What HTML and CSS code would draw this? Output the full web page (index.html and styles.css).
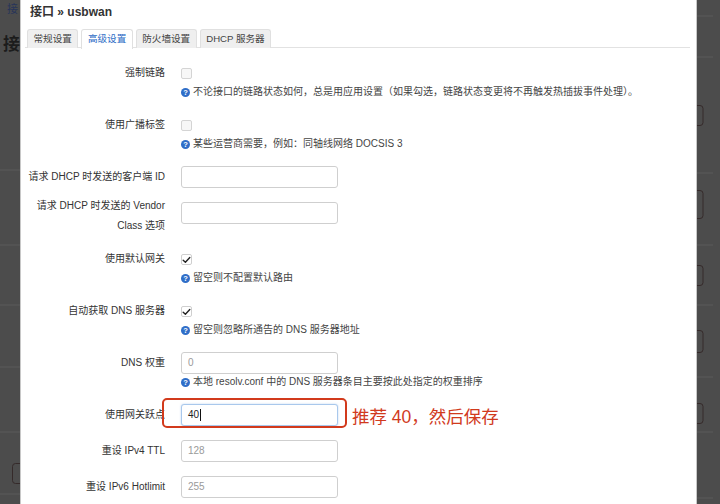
FILE: index.html
```html
<!DOCTYPE html>
<html lang="zh-CN">
<head>
<meta charset="utf-8">
<title>接口 » usbwan</title>
<link rel="stylesheet" href="styles.css">
</head>
<body>
<div class="screen">
  <div class="backdrop backdrop-left">
    <svg width="20" height="504" viewBox="0 0 20 504">
      <text x="7" y="13" class="bg-small">接</text>
      <text x="3" y="50" class="bg-big">接</text>
      <g class="bg-line">
        <line x1="0" y1="170" x2="20" y2="170"/>
        <line x1="0" y1="245" x2="20" y2="245"/>
        <line x1="0" y1="305" x2="20" y2="305"/>
        <line x1="0" y1="367" x2="20" y2="367"/>
        <line x1="0" y1="432" x2="20" y2="432"/>
        <line x1="0" y1="494" x2="20" y2="494"/>
      </g>
      <rect x="12.5" y="463.5" width="14" height="20" rx="3" class="bg-btn"/>
    </svg>
  </div>

  <div class="modal">
    <h3 class="title">接口 » usbwan</h3>
    <ul class="tabs">
      <li class="tab">常规设置</li>
      <li class="tab active">高级设置</li>
      <li class="tab">防火墙设置</li>
      <li class="tab">DHCP 服务器</li>
    </ul>

    <div class="form">
      <div class="row">
        <div class="lbl">强制链路</div>
        <div class="field"><span class="cb"></span></div>
        <div class="help"><span class="q">?</span>不论接口的链路状态如何，总是用应用设置（如果勾选，链路状态变更将不再触发热插拔事件处理）。</div>
      </div>

      <div class="row">
        <div class="lbl">使用广播标签</div>
        <div class="field"><span class="cb"></span></div>
        <div class="help"><span class="q">?</span>某些运营商需要，例如：同轴线网络 DOCSIS 3</div>
      </div>

      <div class="row">
        <div class="lbl">请求 DHCP 时发送的客户端 ID</div>
        <div class="field"><div class="input"></div></div>
      </div>

      <div class="row">
        <div class="lbl lbl-two">请求 DHCP 时发送的 Vendor<br>Class 选项</div>
        <div class="field"><div class="input"></div></div>
      </div>

      <div class="row">
        <div class="lbl">使用默认网关</div>
        <div class="field"><span class="cb checked"><svg width="9" height="8" viewBox="0 0 9 8"><path d="M1.2 4.2 L3.4 6.3 L7.8 1.6" class="tick"/></svg></span></div>
        <div class="help"><span class="q">?</span>留空则不配置默认路由</div>
      </div>

      <div class="row">
        <div class="lbl">自动获取 DNS 服务器</div>
        <div class="field"><span class="cb checked"><svg width="9" height="8" viewBox="0 0 9 8"><path d="M1.2 4.2 L3.4 6.3 L7.8 1.6" class="tick"/></svg></span></div>
        <div class="help"><span class="q">?</span>留空则忽略所通告的 DNS 服务器地址</div>
      </div>

      <div class="row">
        <div class="lbl">DNS 权重</div>
        <div class="field"><div class="input placeholder">0</div></div>
        <div class="help help-input"><span class="q">?</span>本地 resolv.conf 中的 DNS 服务器条目主要按此处指定的权重排序</div>
      </div>

      <div class="row">
        <div class="lbl">使用网关跃点</div>
        <div class="field field-note">
          <div class="input focused">40<span class="caret"></span></div>
          <span class="note">推荐 40，然后保存</span>
        </div>
        <div class="highlight"></div>
      </div>

      <div class="row">
        <div class="lbl">重设 IPv4 TTL</div>
        <div class="field"><div class="input placeholder">128</div></div>
      </div>

      <div class="row">
        <div class="lbl">重设 IPv6 Hotlimit</div>
        <div class="field"><div class="input placeholder">255</div></div>
      </div>
    </div>
  </div>

  <div class="backdrop backdrop-right">
    <svg width="23" height="504" viewBox="0 0 23 504">
      <g class="bg-line">
        <line x1="0" y1="16" x2="16" y2="16"/>
        <line x1="0" y1="57" x2="16" y2="57"/>
        <line x1="0" y1="173" x2="16" y2="173"/>
        <line x1="0" y1="245" x2="16" y2="245"/>
        <line x1="0" y1="305" x2="16" y2="305"/>
        <line x1="0" y1="377" x2="16" y2="377"/>
        <line x1="0" y1="432" x2="16" y2="432"/>
        <line x1="0" y1="498" x2="16" y2="498"/>
      </g>
      <rect x="-10" y="105.5" width="16" height="20" rx="3" class="bg-btn"/>
      <rect x="-10" y="190.5" width="16" height="28" rx="3" class="bg-btn"/>
      <rect x="-10" y="265.5" width="16" height="20" rx="3" class="bg-btn"/>
      <rect x="-10" y="330.5" width="16" height="22" rx="3" class="bg-btn"/>
      <rect x="-10" y="403.5" width="16" height="20" rx="3" class="bg-btn"/>
    </svg>
  </div>
</div>
</body>
</html>
```

FILE: styles.css
```css
* { box-sizing: border-box; }

html, body {
  margin: 0;
  padding: 0;
  background: #4c4c4c;
}

body {
  font-family: "Liberation Sans", "Noto Sans CJK SC", sans-serif;
  font-size: 10px;
  color: #333;
}

.screen {
  display: flex;
  width: 720px;
  height: 504px;
  overflow: hidden;
}

.backdrop {
  flex: none;
  background: #4c4c4c;
}
.backdrop-left { width: 20px; }
.backdrop-right { width: 23px; }
.backdrop svg { display: block; }

.bg-small {
  font-family: "Noto Sans CJK SC", sans-serif;
  font-size: 11px;
  fill: #27345a;
}
.bg-big {
  font-family: "Noto Sans CJK SC", sans-serif;
  font-size: 17px;
  font-weight: 700;
  fill: #1c1c1c;
}
.bg-line line {
  stroke: #5a5a5a;
  stroke-width: 1;
}
.bg-btn {
  fill: none;
  stroke: #352a2a;
  stroke-width: 1;
}

.modal {
  flex: none;
  width: 677px;
  height: 504px;
  background: #fff;
  border-left: 1px solid #c8c8c8;
  border-right: 1px solid #c8c8c8;
  padding: 0 6px 0 4px;
}

.title {
  margin: 4px 0 0;
  padding-left: 5px;
  font-size: 12px;
  line-height: 16px;
  font-weight: 700;
  color: #333;
}

.tabs {
  list-style: none;
  margin: 9px 0 0;
  padding: 0 0 0 2px;
  display: flex;
  gap: 3px;
  border-bottom: 1px solid #e2e2e2;
  height: 19px;
}

.tab {
  height: 19px;
  padding: 0 5.5px;
  line-height: 17px;
  font-size: 9.6px;
  color: #444;
  background: #efefef;
  border: 1px solid #e0e0e0;
  border-bottom: none;
  border-radius: 3px 3px 0 0;
}

.tab.active {
  background: #fff;
  color: #2d6cc6;
  height: 20px;
}

.form {
  padding-top: 14px;
}

.row {
  position: relative;
  display: grid;
  grid-template-columns: 143px 1fr;
  column-gap: 13px;
  margin-bottom: 14px;
}

.lbl {
  grid-column: 1;
  text-align: right;
  padding-right: 3px;
  line-height: 22px;
  color: #333;
  white-space: nowrap;
}

.lbl-two {
  line-height: 20px;
  margin-top: -6px;
  margin-bottom: -2px;
}

.field {
  grid-column: 2;
  display: flex;
  align-items: flex-start;
  height: 22px;
}

.cb {
  width: 11px;
  height: 11px;
  margin-top: 6px;
  border: 1px solid #d4d4d4;
  border-radius: 2px;
  background: #f7f7f7;
  display: flex;
  align-items: center;
  justify-content: center;
}

.cb.checked {
  background: #fff;
  border-color: #cfcfcf;
}
.cb svg { display: block; }
.tick {
  fill: none;
  stroke: #222;
  stroke-width: 1.4;
  stroke-linecap: round;
  stroke-linejoin: round;
}

.help {
  grid-column: 2;
  line-height: 16px;
  color: #444;
  white-space: nowrap;
  display: flex;
  align-items: center;
}

.q {
  flex: none;
  width: 9px;
  height: 9px;
  margin-right: 3px;
  border-radius: 50%;
  background: #2f6ec8;
  color: #fff;
  font-size: 7.5px;
  font-weight: 700;
  line-height: 9px;
  text-align: center;
}

.input {
  width: 157px;
  height: 22px;
  border: 1px solid #cfcfcf;
  border-radius: 3px;
  padding: 0 6px;
  line-height: 20px;
  font-size: 10px;
  color: #333;
  background: #fff;
  display: flex;
  align-items: center;
}

.input.placeholder { color: #9a9a9a; }

.input.focused {
  border-color: #a9c8ec;
  box-shadow: 0 0 2px rgba(120, 170, 230, 0.5);
  color: #222;
}

.caret {
  display: inline-block;
  width: 1px;
  height: 12px;
  margin-left: 1px;
  background: #111;
}

.field-note {
  align-items: flex-start;
}

.note {
  margin-left: 14px;
  margin-top: 1px;
  font-size: 17.5px;
  line-height: 24px;
  color: #d13a1d;
  white-space: nowrap;
}

.highlight {
  position: absolute;
  left: 137px;
  top: -6px;
  width: 185px;
  height: 30px;
  border: 2px solid #d23a1c;
  border-radius: 5px;
  pointer-events: none;
}
```
